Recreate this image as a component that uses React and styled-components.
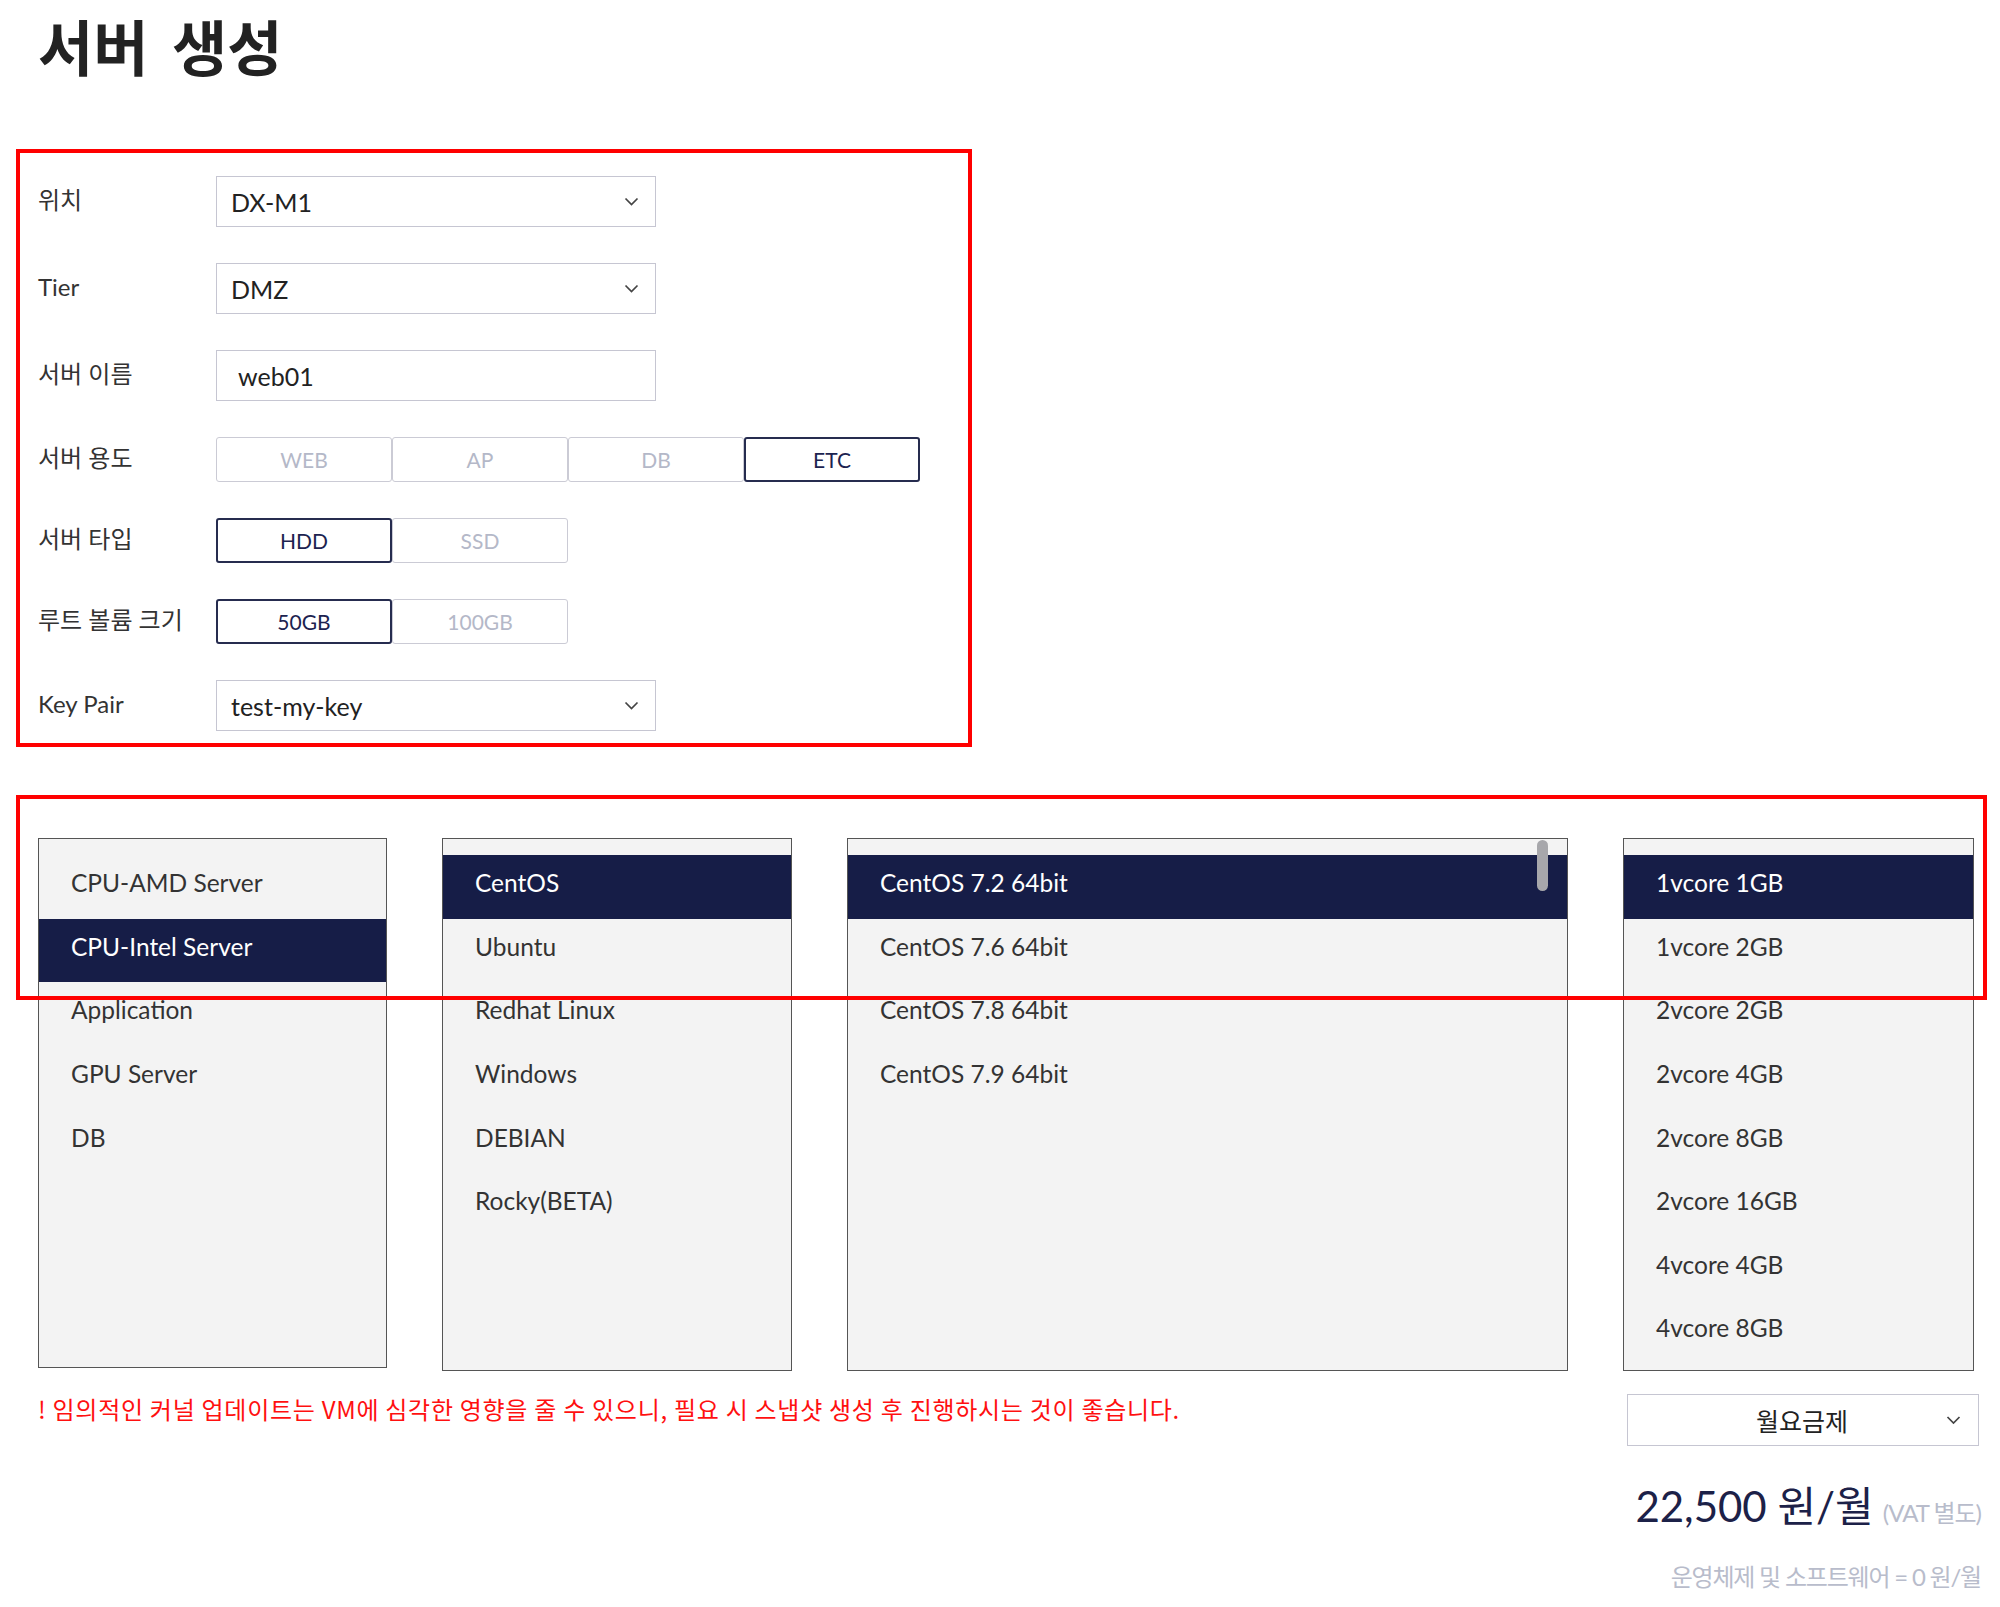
import React from "react";
import styled, { createGlobalStyle } from "styled-components";

const GlobalStyle = createGlobalStyle`
  html, body { margin: 0; padding: 0; background: #fff; }
  body { font-family: Lato, "Noto Sans CJK KR", sans-serif; color: #333; }
  * { box-sizing: border-box; }
`;

const Page = styled.div`
  position: relative;
  width: 2000px;
  min-height: 1607px;
  padding: 15px 21px 0 38px;
`;

const Title = styled.h1`
  margin: 0 0 102px;
  font-family: "Noto Sans CJK KR", sans-serif;
  font-weight: 700;
  font-size: 60px;
  line-height: 59px;
  word-spacing: 10px;
  color: #222;
`;

const Form = styled.div`
  display: grid;
  grid-template-columns: 178px auto;
  row-gap: 36px;
  align-items: center;
  justify-content: start;
`;

const Label = styled.div`
  font-size: 24px;
  line-height: 1;
  color: #333;
  margin-top: -3px;
`;

const SelectBox = styled.div`
  width: ${(p) => p.$w || 440}px;
  height: ${(p) => p.$h || 51}px;
  border: 1.5px solid #c6c6d2;
  background: #fff;
  display: flex;
  align-items: center;
  justify-content: ${(p) => (p.$center ? "center" : "space-between")};
  position: relative;
  padding: 0 16px 0 14px;
  font-size: 25px;
  color: #222;
`;

const ChevronWrap = styled.span`
  display: flex;
  ${(p) => (p.$abs ? "position: absolute; right: 17px; top: 50%; transform: translateY(-50%);" : "")}
`;

const TextInput = styled.input`
  width: 440px;
  height: 51px;
  border: 1.5px solid #c6c6d2;
  padding: 0 0 0 21px;
  font-family: inherit;
  font-size: 25px;
  color: #222;
  background: #fff;
  outline: none;
`;

const Segments = styled.div`
  display: flex;
`;

const Segment = styled.div`
  width: 176px;
  height: 45px;
  display: flex;
  align-items: center;
  justify-content: center;
  border-radius: 3px;
  font-size: 21px;
  background: #fff;
  border: ${(p) => (p.$active ? "2px solid #262c4f" : "1.5px solid #cbcbd5")};
  color: ${(p) => (p.$active ? "#1c2350" : "#b4b8c8")};
`;

const Lists = styled.div`
  display: grid;
  grid-template-columns: 349px 350px 721px 351px;
  column-gap: 55px;
  align-items: start;
  margin-top: 107px;
`;

const List = styled.div`
  position: relative;
  height: ${(p) => p.$h || 533}px;
  border: 1px solid #555;
  border-top-width: 1.5px;
  background: #f3f3f3;
  padding-top: 16px;
`;

const Item = styled.div`
  height: 63.6px;
  display: flex;
  align-items: center;
  padding: 0 0 8px 32px;
  font-size: 24.5px;
  color: ${(p) => (p.$active ? "#fff" : "#333")};
  background: ${(p) => (p.$active ? "#161d47" : "transparent")};
`;

const ScrollThumb = styled.div`
  position: absolute;
  top: 1px;
  right: 19px;
  width: 11px;
  height: 51px;
  border-radius: 6px;
  background: #a7a7ab;
`;

const Bottom = styled.div`
  display: flex;
  justify-content: space-between;
  align-items: flex-start;
  margin-top: 23px;
`;

const Warning = styled.div`
  font-size: 24px;
  line-height: 34px;
  color: #ff1010;
  font-family: "Noto Sans CJK KR", sans-serif;
  margin-top: -2px;
  letter-spacing: 0.72px;
`;

const RightCol = styled.div`
  display: flex;
  flex-direction: column;
  align-items: flex-end;
`;

const PriceRow = styled.div`
  display: flex;
  align-items: baseline;
  margin: 35px -2px 0 0;
  line-height: 50px;
`;

const Price = styled.span`
  font-size: 42px;
  color: #1c2148;
`;

const Vat = styled.span`
  font-size: 24px;
  color: #b8bccb;
  letter-spacing: -1px;
  margin-left: 9px;
`;

const OsPrice = styled.div`
  margin: 24px -2px 0 0;
  font-size: 24px;
  color: #b8bccb;
  letter-spacing: -1.2px;
  line-height: 30px;
`;

const RedBox = styled.div`
  position: absolute;
  border: 4px solid #ff0000;
  pointer-events: none;
  left: ${(p) => p.$x}px;
  top: ${(p) => p.$y}px;
  width: ${(p) => p.$w}px;
  height: ${(p) => p.$h}px;
`;

const Chevron = () => (
  <svg width="15" height="9" viewBox="0 0 15 9">
    <polyline points="1.5,1.5 7.5,7.5 13.5,1.5" fill="none" stroke="#444" strokeWidth="1.7" />
  </svg>
);

const Select = ({ value }) => (
  <SelectBox>
    <span>{value}</span>
    <ChevronWrap>
      <Chevron />
    </ChevronWrap>
  </SelectBox>
);

const SegmentGroup = ({ options, active }) => (
  <Segments>
    {options.map((o) => (
      <Segment key={o} $active={o === active}>
        {o}
      </Segment>
    ))}
  </Segments>
);

const lists = [
  {
    items: ["CPU-AMD Server", "CPU-Intel Server", "Application", "GPU Server", "DB"],
    active: 1,
    h: 530,
  },
  {
    items: ["CentOS", "Ubuntu", "Redhat Linux", "Windows", "DEBIAN", "Rocky(BETA)"],
    active: 0,
  },
  {
    items: ["CentOS 7.2 64bit", "CentOS 7.6 64bit", "CentOS 7.8 64bit", "CentOS 7.9 64bit"],
    active: 0,
    scroll: true,
  },
  {
    items: ["1vcore 1GB", "1vcore 2GB", "2vcore 2GB", "2vcore 4GB", "2vcore 8GB", "2vcore 16GB", "4vcore 4GB", "4vcore 8GB"],
    active: 0,
  },
];

export default function App() {
  return (
    <>
      <GlobalStyle />
      <Page>
        <Title>서버 생성</Title>
        <Form>
          <Label>위치</Label>
          <Select value="DX-M1" />
          <Label>Tier</Label>
          <Select value="DMZ" />
          <Label>서버 이름</Label>
          <TextInput defaultValue="web01" />
          <Label>서버 용도</Label>
          <SegmentGroup options={["WEB", "AP", "DB", "ETC"]} active="ETC" />
          <Label>서버 타입</Label>
          <SegmentGroup options={["HDD", "SSD"]} active="HDD" />
          <Label>루트 볼륨 크기</Label>
          <SegmentGroup options={["50GB", "100GB"]} active="50GB" />
          <Label>Key Pair</Label>
          <Select value="test-my-key" />
        </Form>

        <Lists>
          {lists.map((l, i) => (
            <List key={i} $h={l.h}>
              {l.items.map((it, j) => (
                <Item key={it} $active={j === l.active}>
                  {it}
                </Item>
              ))}
              {l.scroll && <ScrollThumb />}
            </List>
          ))}
        </Lists>

        <Bottom>
          <Warning>! 임의적인 커널 업데이트는 VM에 심각한 영향을 줄 수 있으니, 필요 시 스냅샷 생성 후 진행하시는 것이 좋습니다.</Warning>
          <RightCol>
            <SelectBox $w={352} $h={52} $center>
              <span>월요금제</span>
              <ChevronWrap $abs>
                <Chevron />
              </ChevronWrap>
            </SelectBox>
            <PriceRow>
              <Price>22,500 원/월</Price>
              <Vat>(VAT 별도)</Vat>
            </PriceRow>
            <OsPrice>운영체제 및 소프트웨어 = 0 원/월</OsPrice>
          </RightCol>
        </Bottom>

        <RedBox $x={16} $y={149} $w={956} $h={598} />
        <RedBox $x={16} $y={795} $w={1971} $h={205} />
      </Page>
    </>
  );
}
